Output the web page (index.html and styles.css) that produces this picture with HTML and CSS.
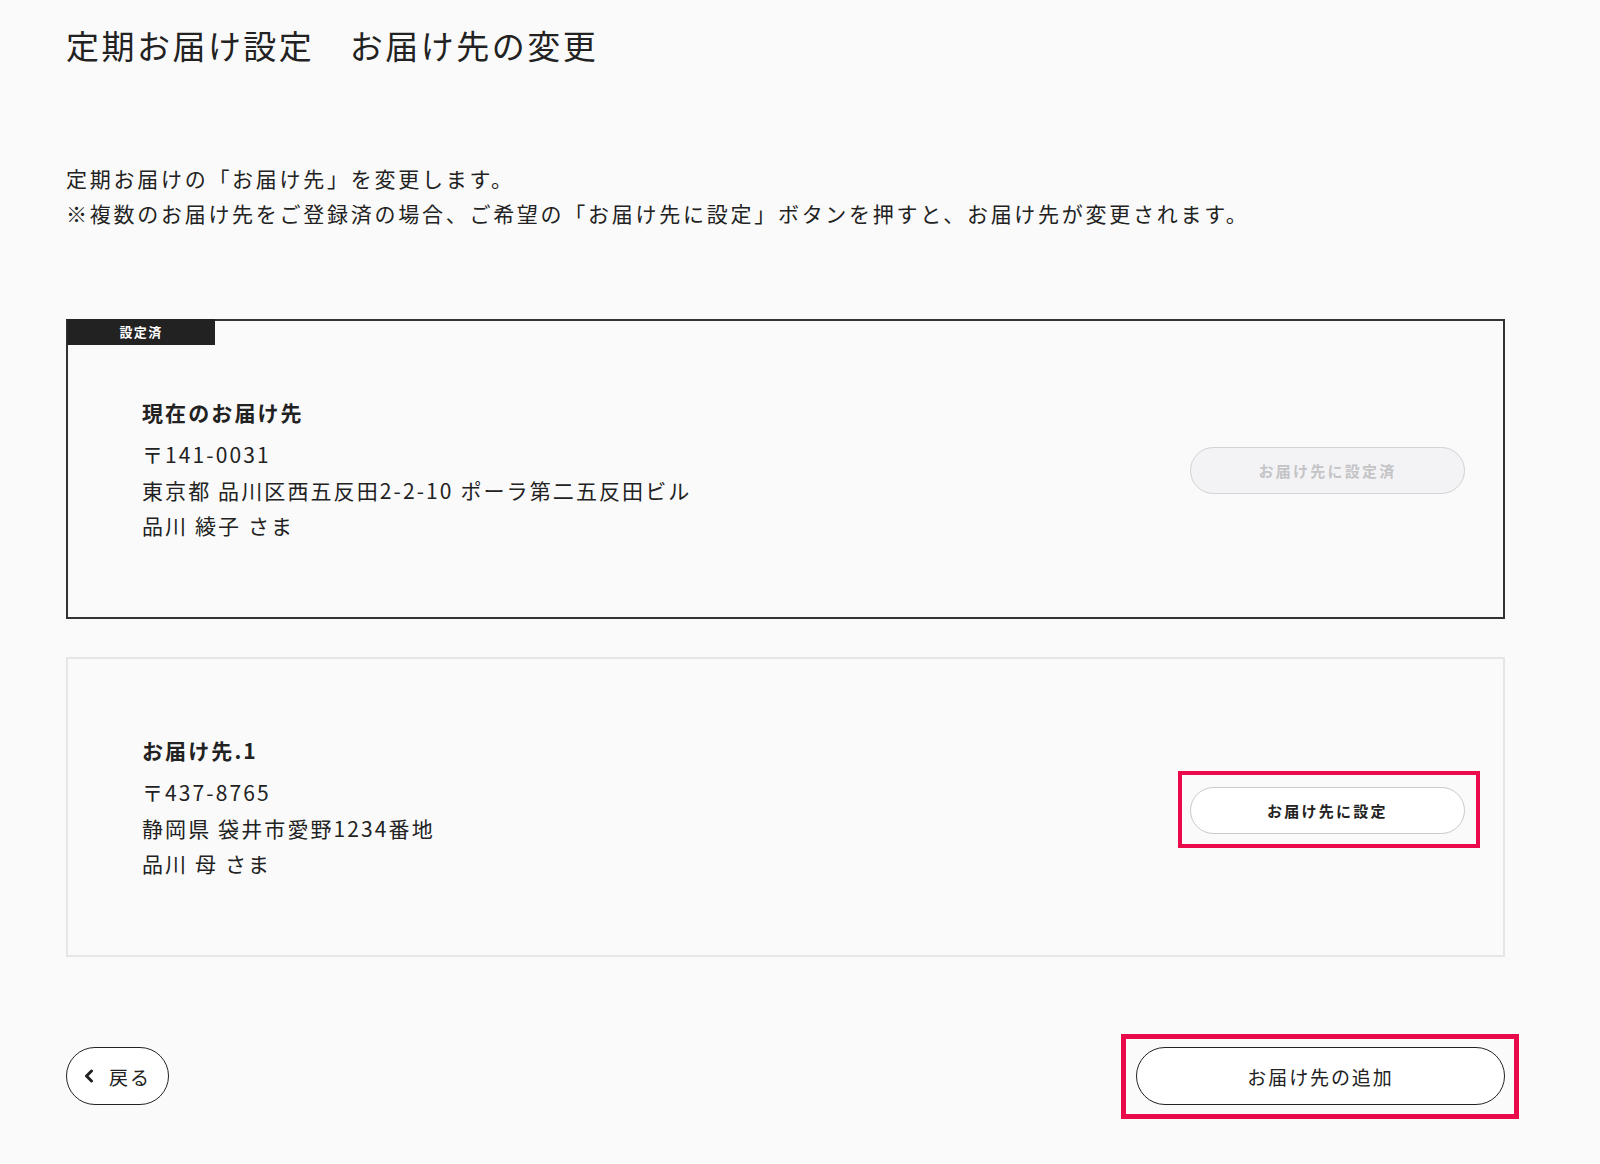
FILE: index.html
```html
<!DOCTYPE html>
<html lang="ja">
<head>
<meta charset="utf-8">
<title>定期お届け設定 お届け先の変更</title>
<link rel="stylesheet" href="styles.css">
</head>
<body>
<main class="page">
  <h1 class="title">定期お届け設定　お届け先の変更</h1>
  <div class="lead">
    <p>定期お届けの「お届け先」を変更します。</p>
    <p>※複数のお届け先をご登録済の場合、ご希望の「お届け先に設定」ボタンを押すと、お届け先が変更されます。</p>
  </div>

  <section class="card card-current">
    <span class="tab">設定済</span>
    <div class="addr">
      <h2 class="addr-title">現在のお届け先</h2>
      <p>〒141-0031</p>
      <p>東京都 品川区西五反田2-2-10 ポーラ第二五反田ビル</p>
      <p>品川 綾子 さま</p>
    </div>
    <button class="btn-set is-disabled" type="button" disabled>お届け先に設定済</button>
  </section>

  <section class="card card-other">
    <div class="addr">
      <h2 class="addr-title">お届け先.1</h2>
      <p>〒437-8765</p>
      <p>静岡県 袋井市愛野1234番地</p>
      <p>品川 母 さま</p>
    </div>
    <span class="mark mark-set"><button class="btn-set" type="button">お届け先に設定</button></span>
  </section>

  <div class="footer">
    <button class="btn-back" type="button">
      <svg class="chev" width="10" height="14" viewBox="0 0 10 14" aria-hidden="true"><polyline points="7.5,2 2.5,7 7.5,12" fill="none" stroke="#222" stroke-width="3" stroke-linecap="round" stroke-linejoin="round"/></svg>
      <span>戻る</span>
    </button>
    <span class="mark mark-add"><button class="btn-add" type="button">お届け先の追加</button></span>
  </div>
</main>
</body>
</html>
```

FILE: styles.css
```css
* { box-sizing: border-box; }
html, body { margin: 0; padding: 0; }
body {
  background: #fafafa;
  color: #222;
  font-family: "Noto Sans CJK JP", "Noto Sans", sans-serif;
}
.page {
  width: 1600px;
  padding: 20px 95px 50px 66px;
}
.title {
  margin: 0;
  font-size: 33px;
  font-weight: 400;
  line-height: 51px;
  letter-spacing: 0.075em;
}
.lead {
  margin-top: 90px;
  font-size: 21px;
  line-height: 35px;
  letter-spacing: 0.13em;
}
.lead p { margin: 0; }

.card {
  position: relative;
  height: 300px;
  display: flex;
  align-items: center;
  justify-content: space-between;
  padding: 0 38px 0 74px;
}
.card-current {
  margin-top: 88px;
  border: 2px solid #333;
}
.card-other {
  margin-top: 38px;
  border: 2px solid #e6e6e6;
}
.tab {
  position: absolute;
  top: -2px;
  left: -1px;
  width: 148px;
  height: 26px;
  background: #222;
  color: #fff;
  font-size: 13px;
  font-weight: 700;
  line-height: 26px;
  letter-spacing: 0.1em;
  text-align: center;
}
.addr { font-size: 21px; letter-spacing: 0.1em; }
.addr p { margin: 0; line-height: 35.5px; }
.addr-title {
  margin: 0 0 7px;
  font-size: 21px;
  font-weight: 700;
  line-height: 36px;
}

.btn-set {
  display: block;
  width: 275px;
  height: 47px;
  border: 1.5px solid #c9c9c9;
  border-radius: 24px;
  background: #fff;
  color: #222;
  font-family: inherit;
  font-size: 15px;
  font-weight: 700;
  letter-spacing: 0.15em;
  padding: 0;
}
.btn-set.is-disabled {
  margin-top: 3px;
  background: #f3f3f5;
  color: #c4c4c6;
  border-color: #d2d2d2;
}

.mark { position: relative; display: block; }
.mark::after {
  content: "";
  position: absolute;
  border: 4px solid #ea0a4c;
  pointer-events: none;
}
.mark-set { margin-top: 7px; }
.mark-set::after { top: -16px; right: -15px; bottom: -14px; left: -12px; }
.mark-add::after { top: -13px; right: -14px; bottom: -14px; left: -15px; border-width: 5px; }

.footer {
  margin-top: 90px;
  display: flex;
  justify-content: space-between;
  align-items: center;
}
.btn-back {
  display: flex;
  align-items: center;
  gap: 15px;
  height: 58px;
  width: 103px;
  padding: 0 0 0 17px;
  border: 1.5px solid #222;
  border-radius: 29px;
  background: #fff;
  color: #222;
  font-family: inherit;
  font-size: 19px;
  letter-spacing: 0.1em;
}
.chev { display: block; }
.btn-add {
  display: block;
  width: 369px;
  height: 58px;
  border: 1.5px solid #222;
  border-radius: 29px;
  background: #fff;
  color: #222;
  font-family: inherit;
  font-size: 19px;
  letter-spacing: 0.1em;
  padding: 0;
}
```
